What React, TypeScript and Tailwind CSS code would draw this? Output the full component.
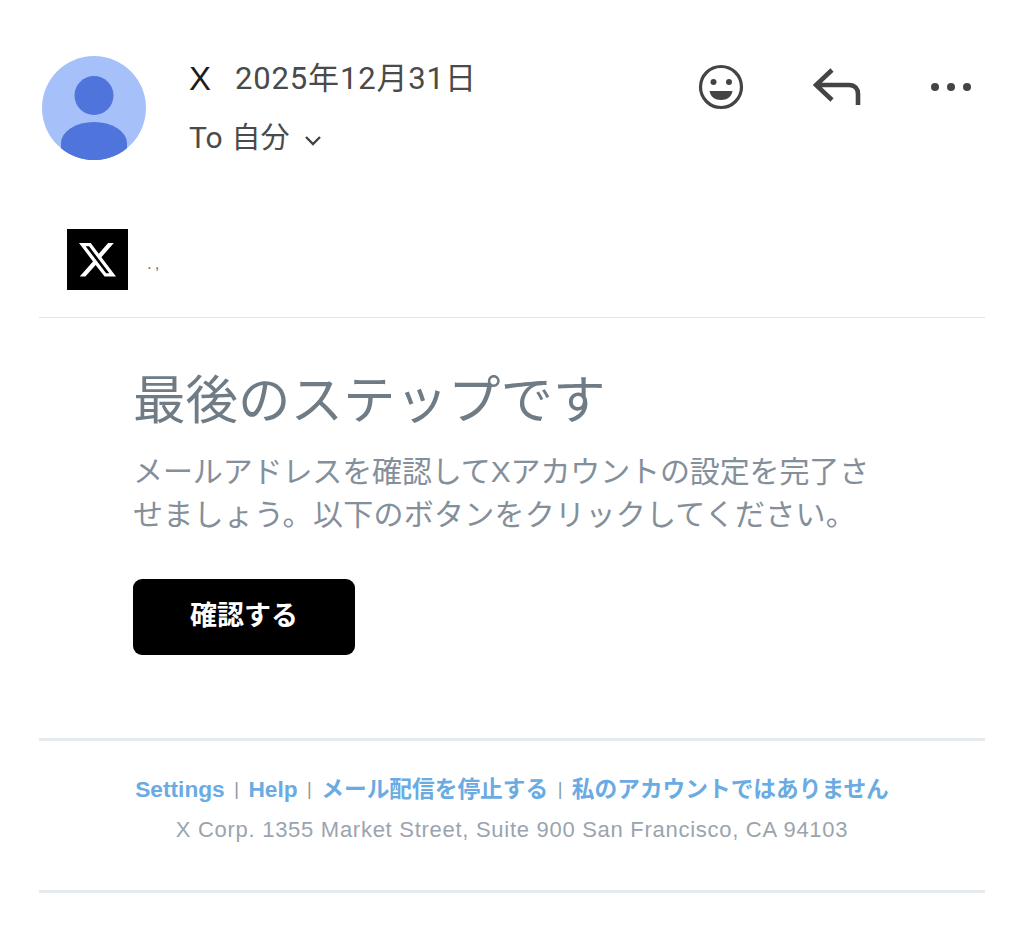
const jp = { fontFamily: '"Liberation Sans", "Noto Sans CJK JP", sans-serif' };
const rb = { fontFamily: 'Roboto, "Noto Sans CJK JP", sans-serif' };

function Avatar() {
  return (
    <svg width="104" height="104" viewBox="0 0 104 104" className="shrink-0">
      <defs>
        <clipPath id="c"><circle cx="52" cy="52" r="52" /></clipPath>
      </defs>
      <circle cx="52" cy="52" r="52" fill="#a6c1fa" />
      <circle cx="52" cy="39.5" r="19.5" fill="#4f74dc" />
      <g clipPath="url(#c)">
        <ellipse cx="52" cy="87" rx="33" ry="21" fill="#4f74dc" />
        <rect x="19" y="87" width="66" height="17" fill="#4f74dc" />
      </g>
    </svg>
  );
}

function Smile() {
  return (
    <svg width="46" height="46" viewBox="0 0 46 46">
      <circle cx="23" cy="23" r="20.5" fill="none" stroke="#444" strokeWidth="3.2" />
      <circle cx="15.5" cy="18" r="3" fill="#444" />
      <circle cx="31" cy="18" r="3" fill="#444" />
      <path d="M11.5 27 H34.5 C33.5 33 29 36 23 36 C17 36 12.5 33 11.5 27 Z" fill="#444" />
    </svg>
  );
}

function Reply() {
  return (
    <svg width="48" height="38" viewBox="0 0 48 38">
      <path d="M19 2 L3 17 L19 32 M3 17 H36 C42 17 45 21 45 26 V37" fill="none" stroke="#444" strokeWidth="4.6" />
    </svg>
  );
}

function Dots() {
  return (
    <svg width="42" height="10" viewBox="0 0 42 10">
      <circle cx="5" cy="5" r="4" fill="#444" />
      <circle cx="21" cy="5" r="4" fill="#444" />
      <circle cx="37" cy="5" r="4" fill="#444" />
    </svg>
  );
}

function Logo() {
  return (
    <div className="flex h-[61px] w-[61px] shrink-0 items-center justify-center bg-black">
      <svg width="37" height="34" viewBox="0 0 24 22">
        <path fill="#fff" d="M18.9 0h3.68l-8.04 9.19L24 21.77h-7.41l-5.8-7.58-6.64 7.58H.47l8.6-9.83L0 0h7.59l5.24 6.93L18.9 0Zm-1.29 19.55h2.04L6.49 2.1H4.3l13.31 17.45Z" />
      </svg>
    </div>
  );
}

function Sep() {
  return <span className="mx-[9.5px] text-[18px] font-normal text-[#8a97a3]">|</span>;
}

export default function App() {
  return (
    <div className="h-[927px] w-[1024px] overflow-hidden bg-white" style={jp}>
      <header className="flex items-start pl-[42px] pr-[52px] pt-[56px]">
        <Avatar />
        <div className="ml-[43px] flex-1 pt-[2px]">
          <div className="flex h-[40px] items-center">
            <span className="text-[33px] leading-none text-[#1c1c1c]">X</span>
            <span className="ml-[24px] text-[31px] leading-none tracking-[0.85px] text-[#4a4a4a]" style={rb}>2025年12月31日</span>
          </div>
          <div className="mt-[22px] flex h-[36px] items-center text-[30px] leading-none text-[#4a4a4a]" style={rb}>
            <span>To</span>
            <span className="ml-[9px] text-[29px]">自分</span>
            <svg width="18" height="12" viewBox="0 0 18 12" className="ml-[14px] mt-[5px]">
              <path d="M2 2 L9 9 L16 2" fill="none" stroke="#444" strokeWidth="2.4" />
            </svg>
          </div>
        </div>
        <div className="flex items-center pt-[8px]">
          <Smile />
          <div className="ml-[69px]"><Reply /></div>
          <div className="ml-[69px]"><Dots /></div>
        </div>
      </header>

      <main className="mx-[39px] mt-[69px]">
        <div className="flex items-center pb-[27px] pl-[28px]">
          <Logo />
          <span className="ml-[19px] mt-[8px] text-[17px] tracking-[3px] text-[#777]">.,</span>
        </div>
        <div className="h-[1px] bg-[#e2e5e8]" />

        <section className="pl-[94px] pr-[110px]">
          <h1 className="mt-[53px] text-[52.5px] font-normal leading-[60px] text-[#6f7c86]">最後のステップです</h1>
          <p className="mt-[19px] text-[30px] leading-[43px] text-[#848f9a]">
            <span className="block tracking-[-0.12px]">メールアドレスを確認してXアカウントの設定を完了さ</span>
            <span className="block tracking-[0.28px]">せましょう。以下のボタンをクリックしてください。</span>
          </p>
          <div className="mt-[43px] flex h-[76px] w-[222px] items-center justify-center rounded-[9px] bg-black pb-[2px] text-[27px] font-bold text-white">
            確認する
          </div>
        </section>

        <div className="mt-[83px] h-[3px] bg-[#e4eaee]" />

        <footer className="flex flex-col items-center">
          <div className="mt-[33px] flex h-[30px] items-center text-[22.7px] font-bold text-[#6aabe3]">
            <span>Settings</span>
            <Sep />
            <span>Help</span>
            <Sep />
            <span>メール配信を停止する</span>
            <Sep />
            <span>私のアカウントではありません</span>
          </div>
          <div className="mt-[11px] text-[22px] leading-[30px] tracking-[0.72px] text-[#9aa4ae]">
            X Corp. 1355 Market Street, Suite 900 San Francisco, CA 94103
          </div>
        </footer>

        <div className="mt-[45px] h-[3px] bg-[#e4eaee]" />
      </main>
    </div>
  );
}
